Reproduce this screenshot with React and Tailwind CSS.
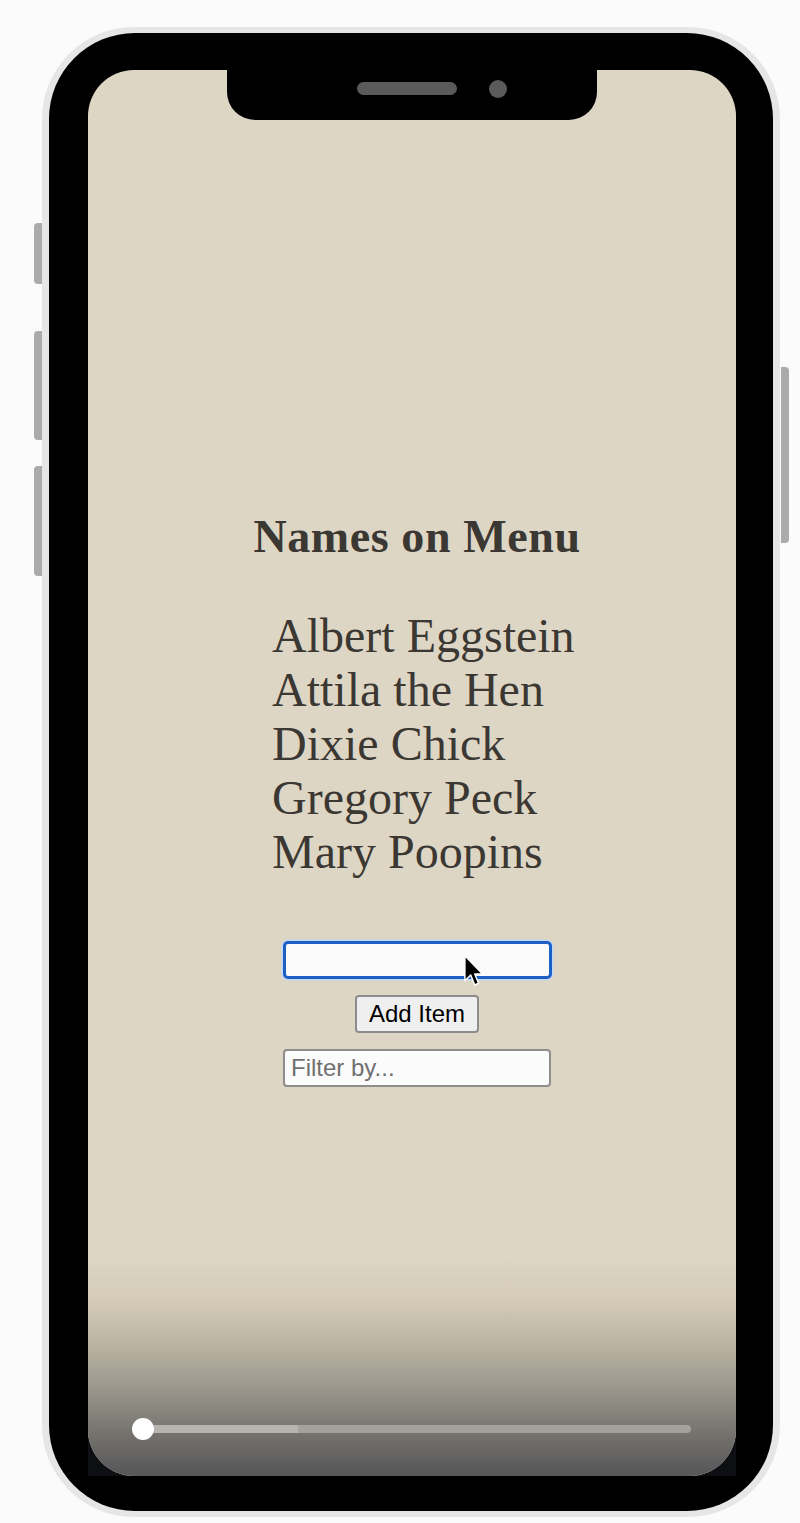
import React from "react";

function Cursor() {
  return (
    <svg width="22" height="34" viewBox="0 0 18 28" className="absolute left-[177px] top-[10px]">
      <path
        d="M1.5 1.5 L1.5 22 L6.3 17.4 L9.6 25.5 L12.8 24.1 L9.6 16.4 L16 16.4 Z"
        fill="#000"
        stroke="#fff"
        strokeWidth="1.2"
        strokeLinejoin="round"
      />
    </svg>
  );
}

export default function App() {
  const names = ["Albert Eggstein", "Attila the Hen", "Dixie Chick", "Gregory Peck", "Mary Poopins"];
  return (
    <div className="w-[800px] h-[1523px] bg-[#fbfbfb] flex items-start pt-[27px] pl-[34px] overflow-hidden">
      {/* left side buttons */}
      <div className="w-[8px] flex flex-col pt-[196px]">
        <div className="h-[61px] bg-[#ababab] rounded-l-[4px]" />
        <div className="h-[109px] mt-[47px] bg-[#ababab] rounded-l-[4px]" />
        <div className="h-[110px] mt-[26px] bg-[#ababab] rounded-l-[4px]" />
      </div>

      {/* phone */}
      <div className="w-[738px] h-[1490px] shrink-0 rounded-[92px] bg-[#e6e6e6] px-[7px] py-[6px]">
        <div className="w-full h-full rounded-[86px] bg-black pl-[39px] pr-[37px] pt-[37px] pb-[35px]">
          <div className="w-[648px] h-[1406px] bg-[linear-gradient(#000_0%,#000_50%,#0e0f13_50%)]">
            <div className="relative w-full h-full rounded-[46px] overflow-hidden bg-[#ded6c5]">
              {/* notch */}
              <div className="absolute left-[139px] top-0 w-[370px] h-[50px] bg-black rounded-b-[28px] flex items-start pl-[130px] pt-[12px] z-10">
                <div className="w-[100px] h-[13px] rounded-full bg-[#5a5a5a]" />
                <div className="w-[18px] h-[18px] rounded-full bg-[#5a5a5a] ml-[32px] -mt-[2px]" />
              </div>

              {/* content */}
              <div className="flex flex-col items-center pl-[10px] pt-[441px] text-[#3b3732] font-['Liberation_Serif',serif]">
                <h1 className="text-[46px] leading-[52px] font-bold tracking-[0.6px] m-0">Names on Menu</h1>
                <ul className="self-start ml-[174px] mt-[46px] text-[48px] leading-[54px]">
                  {names.map((n) => (
                    <li key={n}>{n}</li>
                  ))}
                </ul>

                <div className="relative mt-[62px] w-[269px] h-[38px] rounded-[5px] border-[3px] border-[#1d5fc4] bg-[#fbfbfb] shadow-[0_0_0_1.5px_#c2d7f2]">
                  <Cursor />
                </div>
                <button className="mt-[16px] w-[124px] h-[38px] rounded-[4px] border-2 border-[#8d8d8d] bg-[#efefef] text-[24px] leading-none text-black font-['Liberation_Sans',Arial,sans-serif]">
                  Add Item
                </button>
                <input
                  placeholder="Filter by..."
                  className="mt-[16px] w-[268px] h-[38px] rounded-[4px] border-2 border-[#8d8d8d] bg-[#fbfbfb] pl-[6px] text-[24px] text-black placeholder:text-[#707070] font-['Liberation_Sans',Arial,sans-serif] outline-none"
                />
              </div>

              {/* video overlay gradient */}
              <div className="absolute inset-x-0 bottom-0 h-[220px] bg-[linear-gradient(to_bottom,#ded6c500_0%,#d4cbb9_20%,#bbb4a3_40%,#9b978d_60%,#76746f_80%,#565558_100%)]">
                <div className="absolute left-[44px] right-[45px] bottom-[36px] h-[22px] flex items-center">
                  <div className="absolute left-[11px] right-0 h-[8px] rounded-full bg-[#a3a19b]" />
                  <div className="absolute left-[11px] w-[155px] h-[8px] rounded-l-full bg-[#b6b4ae]" />
                  <div className="relative w-[22px] h-[22px] rounded-full bg-white" />
                </div>
              </div>
            </div>
          </div>
        </div>
      </div>

      {/* right side button */}
      <div className="w-[8px] pt-[340px] ml-[1px]">
        <div className="h-[176px] bg-[#ababab] rounded-r-[4px]" />
      </div>
    </div>
  );
}
